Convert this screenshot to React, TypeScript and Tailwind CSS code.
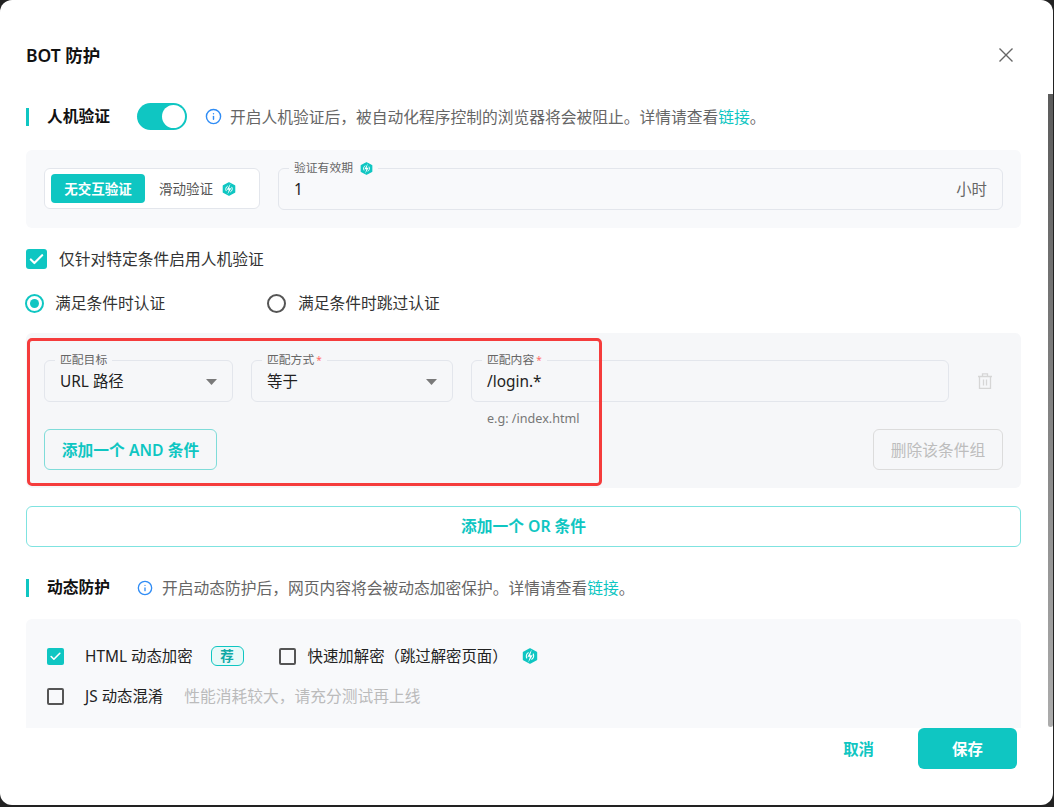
import { Check, Info } from "lucide-react";
import type { ReactNode } from "react";

const ProIcon = ({ size = 14, className = "" }: { size?: number; className?: string }) => (
	<svg width={size} height={size} viewBox="0 0 16 16" className={`shrink-0 ${className}`}>
		<polygon points="8,1 14.4,4.4 14.4,11.6 8,15 1.6,11.6 1.6,4.4" fill="#0fc6c2" stroke="#0fc6c2" strokeWidth="1.6" strokeLinejoin="round" />
		<path d="M6.6 4.6A3.9 3.9 0 0 0 5 10.4M9.4 11.4A3.9 3.9 0 0 0 11 5.6" fill="none" stroke="#fff" strokeWidth="1.1" />
		<path d="M9.8 1.6 5.4 8.8h2.5L6.2 14.4l4.5-7.2H8.1z" fill="#fff" />
	</svg>
);

const Field = ({ label, required, children, bg, extra }: { label: string; required?: boolean; children?: ReactNode; bg: string; extra?: ReactNode }) => (
	<div className="relative flex h-[42px] items-center justify-between rounded-md border border-[#e3e6ec] pl-[15px] pr-[15px] pt-[2px] text-[15.4px] text-[#222]">
		<span className={`absolute -top-[8px] left-[10px] flex h-[14px] items-center gap-[7px] px-[5px] text-[11.8px] text-[#666] ${bg}`}>
			<span>
				{label}
				{required && <span className="ml-[2px] text-[10px] text-[#ff6b6b]">*</span>}
			</span>
			{extra}
		</span>
		{children}
	</div>
);

const Caret = () => (
	<svg width="11" height="6" viewBox="0 0 11 6" className="shrink-0">
		<path d="M0 0h11L5.5 6z" fill="#7a7a7a" />
	</svg>
);

const SectionTitle = ({ title }: { title: string }) => (
	<div className="flex h-[27px] w-[111px] shrink-0 items-center">
		<div className="h-[18px] w-[3px] bg-[#0fc6c2]" />
		<h3 className="ml-[18px] text-[15.75px] font-bold text-[#111]">{title}</h3>
	</div>
);

const Box = ({ checked, className = "" }: { checked?: boolean; className?: string }) =>
	checked ? (
		<span className={`flex h-[17px] w-[17px] shrink-0 items-center justify-center rounded-[2px] bg-[#0fc6c2] ${className}`}>
			<Check size={13} color="#fff" strokeWidth={3} />
		</span>
	) : (
		<span className={`h-[17px] w-[17px] shrink-0 rounded-[2px] border-2 border-[#555] ${className}`} />
	);

export default function App() {
	return (
		<div className="h-screen w-screen overflow-hidden bg-[#222] font-['Noto_Sans','Noto_Sans_CJK_SC',sans-serif]">
			<div className="relative flex h-[805px] w-[1053px] flex-col overflow-hidden rounded-xl bg-white">
				{/* Header */}
				<div className="flex h-[94px] shrink-0 items-start justify-between pl-[26px] pr-[39px] pt-[42px]">
					<h2 className="text-[17.5px] font-semibold leading-[26px] text-[#111]">BOT 防护</h2>
					<button className="mt-[5px]">
						<svg width="16" height="16" viewBox="0 0 16 16" fill="none" stroke="#666" strokeWidth="1.4">
							<path d="M1.5 1.5l13 13M14.5 1.5l-13 13" />
						</svg>
					</button>
				</div>

				{/* Body */}
				<div className="h-[634px] shrink-0 overflow-hidden pl-[26px] pr-[32px] pt-[9px]">
					<div className="flex h-[27px] items-center">
						<SectionTitle title="人机验证" />
						<div className="flex h-[27px] w-[50px] items-center justify-end rounded-full bg-[#0fc6c2] pr-[2px]">
							<div className="h-[23px] w-[23px] rounded-full bg-white" />
						</div>
						<Info size={17} color="#2f8cf5" className="ml-[18px]" />
						<p className="ml-[8px] pt-[2px] text-[15.75px] text-[#666]">
							开启人机验证后，被自动化程序控制的浏览器将会被阻止。详情请查看<span className="text-[#0fc6c2]">链接</span>。
						</p>
					</div>

					<div className="mt-[20px] flex h-[78px] gap-[18px] rounded-md bg-[#f8f9fb] px-[18px] pt-[18px]">
						<div className="flex h-[41px] w-[216px] shrink-0 items-center rounded-md border border-[#e3e6ec] bg-white pl-[6px]">
							<div className="flex h-[29px] w-[94px] items-center justify-center rounded bg-[#0fc6c2] pt-[2px] text-[13.5px] font-bold text-white">无交互验证</div>
							<span className="ml-[14px] pt-[2px] text-[13.5px] text-[#555]">滑动验证</span>
							<ProIcon className="ml-[9px]" />
						</div>
						<div className="flex-1">
							<Field label="验证有效期" bg="bg-[#f8f9fb]" extra={<ProIcon size={13} />}>
								<span>1</span>
								<span className="text-[#666]">小时</span>
							</Field>
						</div>
					</div>

					<label className="mt-[21px] flex h-[20px] items-center text-[15.75px] text-[#333]">
						<span className="flex h-[20px] w-[21px] items-center justify-center rounded-[3px] bg-[#0fc6c2]">
							<Check size={17} color="#fff" strokeWidth={3} />
						</span>
						<span className="ml-[12px] pt-[2px]">仅针对特定条件启用人机验证</span>
					</label>

					<div className="mt-[24px] flex h-[20px] items-center text-[15.75px] text-[#333]">
						<span className="-ml-[1px] flex h-[19px] w-[19px] items-center justify-center rounded-full border-2 border-[#0fc6c2]">
							<span className="h-[9px] w-[9px] rounded-full bg-[#0fc6c2]" />
						</span>
						<span className="ml-[11px] w-[212px] pt-[2px]">满足条件时认证</span>
						<span className="h-[19px] w-[19px] rounded-full border-2 border-[#555]" />
						<span className="ml-[12px] pt-[2px]">满足条件时跳过认证</span>
					</div>

					{/* Condition group */}
					<div className="relative mt-[20px] h-[155px] rounded-md bg-[#f6f7f9] px-[18px] pt-[27px]">
						<div className="flex h-[69px] items-start gap-[18px]">
							<div className="w-[189px]">
								<Field label="匹配目标" bg="bg-[#f6f7f9]">
									<span>URL 路径</span>
									<Caret />
								</Field>
							</div>
							<div className="w-[202px]">
								<Field label="匹配方式" required bg="bg-[#f6f7f9]">
									<span>等于</span>
									<Caret />
								</Field>
							</div>
							<div className="w-[478px]">
								<Field label="匹配内容" required bg="bg-[#f6f7f9]">
									<span>/login.*</span>
								</Field>
								<p className="mt-[9px] pl-[16px] text-[12.6px] leading-[16px] text-[#777]">e.g: /index.html</p>
							</div>
							<svg width="14" height="16" viewBox="0 0 14 16" fill="none" stroke="#d6d6d6" strokeWidth="1.3" className="ml-[11px] mt-[13px] shrink-0">
								<path d="M0 3.5h14M1.5 3.5v12h11v-12M4.5 3.5V.8h5v2.7M5.5 6.5v6M8.5 6.5v6" />
							</svg>
						</div>
						<div className="flex items-start justify-between">
							<button className="h-[41px] w-[173px] rounded-md border border-[#7fdcd9] pt-[2px] text-[15.75px] font-semibold text-[#0fc6c2]">添加一个 AND 条件</button>
							<button className="h-[41px] w-[130px] rounded-md border border-[#dcdcdc] pt-[2px] text-[15.75px] text-[#bdbdbd]">删除该条件组</button>
						</div>
						<div className="pointer-events-none absolute left-[1px] top-[5px] h-[148px] w-[575px] rounded-[5px] border-[3px] border-[#f53c3c]" />
					</div>

					<button className="mt-[18px] h-[41px] w-full rounded-md border border-[#7fe3e0] text-[15.75px] font-semibold text-[#0fc6c2]">添加一个 OR 条件</button>

					<div className="mt-[27px] flex h-[27px] items-center">
						<SectionTitle title="动态防护" />
						<Info size={16} color="#2f8cf5" />
						<p className="ml-[9px] pt-[2px] text-[15.75px] text-[#666]">
							开启动态防护后，网页内容将会被动态加密保护。详情请查看<span className="text-[#0fc6c2]">链接</span>。
						</p>
					</div>

					<div className="mt-[18px] h-[130px] rounded-md bg-[#f8f9fb] pl-[21px] pt-[27px] text-[15.4px] text-[#222]">
						<div className="flex h-[20px] items-center">
							<Box checked />
							<span className="ml-[21px] pt-[2px]">HTML 动态加密</span>
							<span className="ml-[18px] flex h-[20px] w-[33px] items-center justify-center rounded-[6px] border border-[#0fc6c2] bg-[#e8f9f8] text-[13.5px] font-bold text-[#0fa8a5]">荐</span>
							<Box className="ml-[35px]" />
							<span className="ml-[12px] pt-[2px]">快速加解密（跳过解密页面）</span>
							<ProIcon size={16} className="ml-[14px]" />
						</div>
						<div className="mt-[20px] flex h-[20px] items-center">
							<Box />
							<span className="ml-[21px] pt-[2px]">JS 动态混淆</span>
							<span className="ml-[21px] pt-[2px] text-[15.75px] text-[#bbb]">性能消耗较大，请充分测试再上线</span>
						</div>
					</div>
				</div>

				{/* Footer */}
				<div className="flex flex-1 items-start justify-end pr-[36px]">
					<button className="mr-[44px] h-[41px] pt-[2px] text-[15.4px] font-semibold text-[#0fc6c2]">取消</button>
					<button className="h-[41px] w-[99px] rounded-md bg-[#0fc6c2] pt-[2px] text-[15.4px] font-semibold text-white">保存</button>
				</div>

				{/* Scrollbar thumb */}
				<div className="absolute right-0 top-[94px] h-[633px] w-[5px] rounded-b-sm bg-linear-to-b from-[#5c5c5c] to-[#acacac]" />
			</div>
		</div>
	);
}
